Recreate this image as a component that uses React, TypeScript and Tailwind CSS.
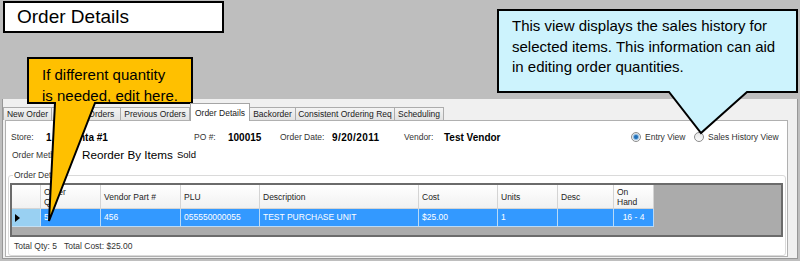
import React from "react";

const tabs = [
  { label: "New Order", w: "w-[49px]" },
  { label: "Current Orders", w: "w-[70px]" },
  { label: "Previous Orders", w: "w-[70px]" },
  { label: "Order Details", w: "w-[60px]", active: true },
  { label: "Backorder", w: "w-[47px]" },
  { label: "Consistent Ordering Req", w: "w-[100px]" },
  { label: "Scheduling", w: "w-[50px]" },
];

const cols = [
  { head: ["Order", "Qty"], value: "5", w: "w-[60px]" },
  { head: ["Vendor Part #"], value: "456", w: "w-[80px]" },
  { head: ["PLU"], value: "055550000055", w: "w-[79px]" },
  { head: ["Description"], value: "TEST PURCHASE UNIT", w: "w-[159px]" },
  { head: ["Cost"], value: "$25.00", w: "w-[79px]" },
  { head: ["Units"], value: "1", w: "w-[60px]" },
  { head: ["Desc"], value: "", w: "w-[56px]" },
  { head: ["On", "Hand"], value: "16 - 4", w: "w-[40px]", center: true },
];

function Radio({ checked }: { checked?: boolean }) {
  return (
    <span className="w-[10px] h-[10px] rounded-full border border-[#8c8c8c] bg-gradient-to-b from-[#e6e6e6] to-[#fbfbfb] flex items-center justify-center shrink-0">
      {checked && <span className="w-[4px] h-[4px] rounded-full bg-[#1f6fb8] shadow-[0_0_1px_1px_#7fb2de]" />}
    </span>
  );
}

function Callouts() {
  return (
    <>
      <svg className="absolute left-0 top-0 pointer-events-none" width={800} height={261}>
        <path
          d="M498 10 H797 V92 H747 L701 133 L669 92 H498 Z"
          fill="#cdf3fd"
          stroke="#000"
          strokeWidth={2}
          strokeLinejoin="miter"
        />
        <path
          d="M28 58 H192 V103 H95 L49 221 L55 103 H28 Z"
          fill="#ffc000"
          stroke="#000"
          strokeWidth={2}
          strokeLinejoin="miter"
        />
      </svg>
      <div className="absolute left-[42px] top-[64px] text-[15px] leading-[21px] text-black">
        If different quantity
        <br />
        is needed, edit here.
      </div>
      <div className="absolute left-[512px] top-[16px] text-[15px] leading-[20.5px] text-black">
        This view displays the sales history for
        <br />
        selected items. This information can aid
        <br />
        in editing order quantities.
      </div>
    </>
  );
}

export default function App() {
  return (
    <div className="relative w-[800px] h-[261px] overflow-hidden bg-[#bebebe] font-['Liberation_Sans',Arial,sans-serif] flex flex-col">
      <div className="ml-[3px] mt-[1px] w-[221px] h-[32px] border-2 border-black bg-white pl-[12px] flex items-center text-[19px] text-black">
        Order Details
      </div>

      <div className="ml-[2px] mt-[66px] w-[796px] h-[160px] bg-[#f0f0f0] border-x border-b border-[#979797] flex flex-col">
        <div className="h-[21px] flex items-end shrink-0">
          {tabs.map((t) =>
            t.active ? (
              <div
                key={t.label}
                className={`${t.w} h-[18px] -mb-px relative z-10 bg-white border border-b-0 border-[#a5a5a5] text-[8.5px] text-[#202020] flex items-start justify-center pt-[3px] shrink-0`}
              >
                {t.label}
              </div>
            ) : (
              <div
                key={t.label}
                className={`${t.w} h-[13px] bg-gradient-to-b from-[#f4f4f4] to-[#e2e2e2] border border-b-0 border-[#acacac] -ml-px first:ml-0 text-[8.5px] leading-[12px] text-[#202020] text-center whitespace-nowrap shrink-0`}
              >
                {t.label}
              </div>
            )
          )}
        </div>

        <div className="ml-[2px] w-[783px] h-[137px] bg-white border border-[#b0b0b0] flex flex-col">
          <div className="mt-[9px] h-[14px] flex items-center pl-[5px] text-[8.5px] text-[#333]">
            <span className="w-[35px] shrink-0">Store:</span>
            <span className="w-[148px] shrink-0 text-[10px] font-bold text-black">1 - Atlanta #1</span>
            <span className="w-[34px] shrink-0">PO #:</span>
            <span className="w-[52px] shrink-0 text-[10px] font-bold text-black">100015</span>
            <span className="w-[52px] shrink-0">Order Date:</span>
            <span className="w-[72px] shrink-0 text-[10px] font-bold text-black tracking-[0.4px]">9/20/2011</span>
            <span className="w-[40px] shrink-0">Vendor:</span>
            <span className="w-[187px] shrink-0 text-[10px] font-bold text-black">Test Vendor</span>
            <span className="flex items-center gap-[4px] w-[63px] shrink-0">
              <Radio checked />
              <span>Entry View</span>
            </span>
            <span className="flex items-center gap-[4px]">
              <Radio />
              <span>Sales History View</span>
            </span>
          </div>

          <div className="mt-[4px] h-[14px] flex items-center pl-[6px] text-[8.5px] text-[#333]">
            <span className="w-[70px] shrink-0">Order Method:</span>
            <span className="text-[11.7px] text-black">Reorder By Items</span>
            <span className="ml-[4px] text-[9.5px] text-black">Sold</span>
          </div>

          <fieldset className="mt-[8px] ml-[2px] w-[778px] h-[86px] border border-[#dadada] rounded-[3px] px-0 flex flex-col">
            <legend className="ml-[4px] px-[1px] text-[8.5px] leading-[10px] text-[#333]">Order Details</legend>
            <div className="mt-[3px] ml-[1px] w-[773px] h-[54px] border-2 border-[#6b6b6b] bg-[#ababab] flex flex-col">
              <div className="h-[24px] flex shrink-0">
                <div className="w-[29px] h-full bg-gradient-to-b from-white to-[#f1f1f1] border-r border-b border-[#d4d4d4] shrink-0" />
                {cols.map((c) => (
                  <div
                    key={c.head.join(" ")}
                    className={`${c.w} h-full bg-gradient-to-b from-white to-[#f1f1f1] border-r border-b border-[#d4d4d4] pl-[3px] flex flex-col justify-center text-[8.5px] leading-[10px] text-[#1e1e1e] shrink-0`}
                  >
                    {c.head.map((h) => (
                      <span key={h}>{h}</span>
                    ))}
                  </div>
                ))}
              </div>
              <div className="h-[18px] flex shrink-0">
                <div className="w-[29px] h-full bg-[#99d0f2] border-r border-b border-[#c4dff3] flex items-center pl-[3px] shrink-0">
                  <svg width="5" height="8" viewBox="0 0 5 8">
                    <path d="M0 0 L5 4 L0 8 Z" fill="#000" />
                  </svg>
                </div>
                {cols.map((c) => (
                  <div
                    key={c.head.join(" ")}
                    className={`${c.w} h-full bg-[#3399ff] border-r border-b border-[#b9daf7] flex items-center text-[8.5px] text-white shrink-0 ${c.center ? "justify-center" : "pl-[3px]"}`}
                  >
                    {c.value}
                  </div>
                ))}
              </div>
            </div>
            <div className="mt-[3px] ml-[5px] text-[8.5px] leading-[12px] text-[#333] whitespace-pre">
              {"Total Qty: 5   Total Cost: $25.00"}
            </div>
          </fieldset>
        </div>
      </div>

      <Callouts />
    </div>
  );
}
